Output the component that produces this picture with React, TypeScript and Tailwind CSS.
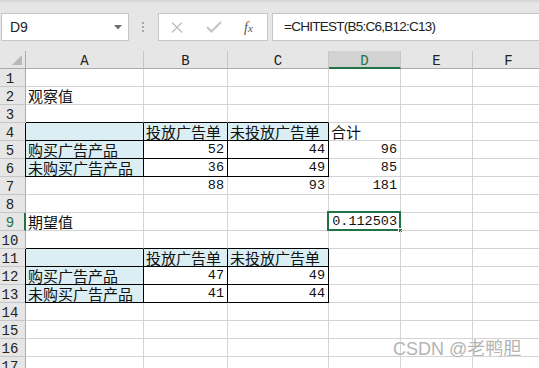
import React from "react";

type Cell = {
  t?: string;
  num?: boolean;
  fill?: boolean;
  bR?: boolean;
  bB?: boolean;
  bL?: boolean;
  sel?: boolean;
};

const CJK = { fontFamily: '"Noto Sans CJK SC", "Noto Sans", sans-serif' };
const MONO = { fontFamily: '"Liberation Mono", "DejaVu Sans Mono", monospace' };

function buildRows(): Cell[][] {
  const rows: Cell[][] = [];
  for (let r = 1; r <= 17; r++) {
    rows.push([{}, {}, {}, {}, {}, {}]);
  }
  const set = (r: number, c: number, v: Cell) => {
    rows[r - 1][c] = { ...rows[r - 1][c], ...v };
  };
  set(2, 0, { t: "观察值" });
  [3, 10].forEach((r) => {
    for (let c = 0; c < 3; c++) set(r, c, { bB: true });
  });
  [4, 5, 6, 11, 12, 13].forEach((r) => {
    for (let c = 0; c < 3; c++) set(r, c, { bB: true, bR: true });
    set(r, 0, { bL: true });
  });
  set(4, 0, { fill: true });
  set(4, 1, { t: "投放广告单", fill: true });
  set(4, 2, { t: "未投放广告单", fill: true });
  set(4, 3, { t: "合计" });
  set(5, 0, { t: "购买广告产品", fill: true });
  set(5, 1, { t: "52", num: true });
  set(5, 2, { t: "44", num: true });
  set(5, 3, { t: "96", num: true });
  set(6, 0, { t: "未购买广告产品", fill: true });
  set(6, 1, { t: "36", num: true });
  set(6, 2, { t: "49", num: true });
  set(6, 3, { t: "85", num: true });
  set(7, 1, { t: "88", num: true });
  set(7, 2, { t: "93", num: true });
  set(7, 3, { t: "181", num: true });
  set(9, 0, { t: "期望值" });
  set(9, 3, { t: "0.112503", num: true, sel: true });
  set(11, 0, { fill: true });
  set(11, 1, { t: "投放广告单", fill: true });
  set(11, 2, { t: "未投放广告单", fill: true });
  set(12, 0, { t: "购买广告产品", fill: true });
  set(12, 1, { t: "47", num: true });
  set(12, 2, { t: "49", num: true });
  set(13, 0, { t: "未购买广告产品", fill: true });
  set(13, 1, { t: "41", num: true });
  set(13, 2, { t: "44", num: true });
  return rows;
}

function Toolbar() {
  return (
    <div className="relative h-[51px] bg-[#e6e6e6] flex items-start">
      <div className="absolute left-0 right-0 top-0 h-[3px] bg-gradient-to-b from-[#d2d2d2] to-[#e6e6e6]" />
      <div
        className="mt-[13px] ml-[1px] w-[128px] h-[28px] bg-white border border-[#c6c6c6] flex items-center justify-between pl-[8px] pr-[6px]"
        style={{ fontFamily: '"Liberation Sans", Arial, sans-serif' }}
      >
        <span className="text-[14px] text-[#222]">D9</span>
        <svg width="8" height="5" viewBox="0 0 8 5">
          <path d="M0 0 L8 0 L4 4.5 Z" fill="#6f6f6f" />
        </svg>
      </div>
      <div className="mt-[22px] ml-[13px] w-[2px] flex flex-col gap-[2px]">
        <div className="w-[2px] h-[2px] bg-[#a8a8a8]" />
        <div className="w-[2px] h-[2px] bg-[#a8a8a8]" />
        <div className="w-[2px] h-[2px] bg-[#a8a8a8]" />
      </div>
      <div className="mt-[13px] ml-[14px] w-[110px] h-[28px] bg-white border border-[#c6c6c6] flex items-center">
        <svg className="ml-[12px]" width="12" height="11" viewBox="0 0 12 11">
          <path d="M1 0.5 L11 10.5 M11 0.5 L1 10.5" stroke="#bdbdbd" strokeWidth="1.3" />
        </svg>
        <svg className="ml-[23px]" width="16" height="12" viewBox="0 0 16 12">
          <path d="M1 6 L5.5 10.5 L15 1" stroke="#c3c3c3" strokeWidth="2" fill="none" />
        </svg>
        <span
          className="ml-[22px] text-[14px] italic text-[#555]"
          style={{ fontFamily: '"Liberation Serif", "Times New Roman", serif' }}
        >
          f<span className="text-[11px]">x</span>
        </span>
      </div>
      <div
        className="mt-[13px] ml-[4px] flex-1 h-[28px] bg-white border border-[#c6c6c6] border-r-0 flex items-center pl-[11px] text-[13.5px] text-[#222] tracking-[-0.75px]"
        style={{ fontFamily: '"Liberation Sans", Arial, sans-serif' }}
      >
        =CHITEST(B5:C6,B12:C13)
      </div>
    </div>
  );
}

export default function App() {
  const rows = buildRows();
  const letters = ["A", "B", "C", "D", "E", "F"];
  return (
    <div className="relative w-[539px] h-[368px] overflow-hidden bg-white">
      <Toolbar />
      <div className="grid grid-cols-[26px_118px_84px_101px_72px_72px_72px] auto-rows-[18px]">
        <div className="relative bg-[#e6e6e6] border-r border-b border-[#ababab]">
          <svg className="absolute right-[3px] bottom-[3px]" width="10" height="10" viewBox="0 0 10 10">
            <path d="M10 0 L10 10 L0 10 Z" fill="#b8b8b8" />
          </svg>
        </div>
        {letters.map((l, i) => (
          <div
            key={l}
            className={
              i === 3
                ? "bg-[#d2d2d2] border-r border-[#c6c6c6] border-b-2 border-b-[#217346] text-[#217346] flex items-center justify-center text-[14px] leading-none"
                : "bg-[#e6e6e6] border-r border-[#c6c6c6] border-b border-b-[#ababab] text-[#222] flex items-center justify-center text-[14px] leading-none"
            }
            style={MONO}
          >
            <span className="mt-[3px]">{l}</span>
          </div>
        ))}
        {rows.map((row, ri) => {
          const rn = ri + 1;
          return (
            <React.Fragment key={rn}>
              <div
                className={
                  rn === 9
                    ? "bg-[#e6e6e6] border-b border-[#c6c6c6] border-r-2 border-r-[#217346] text-[#217346] flex items-center justify-center pr-[5px] pl-[1px] text-[14px] leading-none"
                    : "bg-[#e6e6e6] border-b border-[#c6c6c6] border-r border-r-[#ababab] text-[#222] flex items-center justify-center pr-[5px] text-[14px] leading-none"
                }
                style={MONO}
              >
                <span className="mt-[3px]">{rn}</span>
              </div>
              {row.map((c, ci) => {
                const cls = [
                  "relative flex items-end whitespace-nowrap text-[#111]",
                  c.bR ? "border-r border-r-black" : "border-r border-r-[#d4d4d4]",
                  c.bB ? "border-b border-b-black" : "border-b border-b-[#d4d4d4]",
                  c.bL ? "shadow-[-1px_0_0_#000]" : "",
                  c.fill ? "bg-[#daeef3]" : "",
                  c.num ? "justify-end pr-[3px] text-[13.5px] leading-[15px]" : "pl-[2px] text-[15px] leading-[17px]",
                ].join(" ");
                return (
                  <div key={ci} className={cls} style={c.num ? MONO : CJK}>
                    {c.t ? <span className={c.num ? "mb-[1px]" : ""}>{c.t}</span> : null}
                    {c.sel ? (
                      <>
                        <div className="absolute left-[-2px] top-[-2px] right-[-1px] bottom-[-1px] border-2 border-[#217346]" />
                        <div className="absolute right-[-3px] bottom-[-3px] w-[5px] h-[5px] bg-[#217346] border border-white" />
                      </>
                    ) : null}
                  </div>
                );
              })}
            </React.Fragment>
          );
        })}
      </div>
      <div
        className="absolute left-[393px] top-[334px] text-[18px] text-[#b4b4b4] whitespace-nowrap"
        style={{ textShadow: "0 0 1px #fff, 0 0 1px #fff", fontFamily: '"Liberation Sans", Arial, sans-serif' }}
      >
        CSDN @<span style={CJK}>老鸭胆</span>
      </div>
    </div>
  );
}
